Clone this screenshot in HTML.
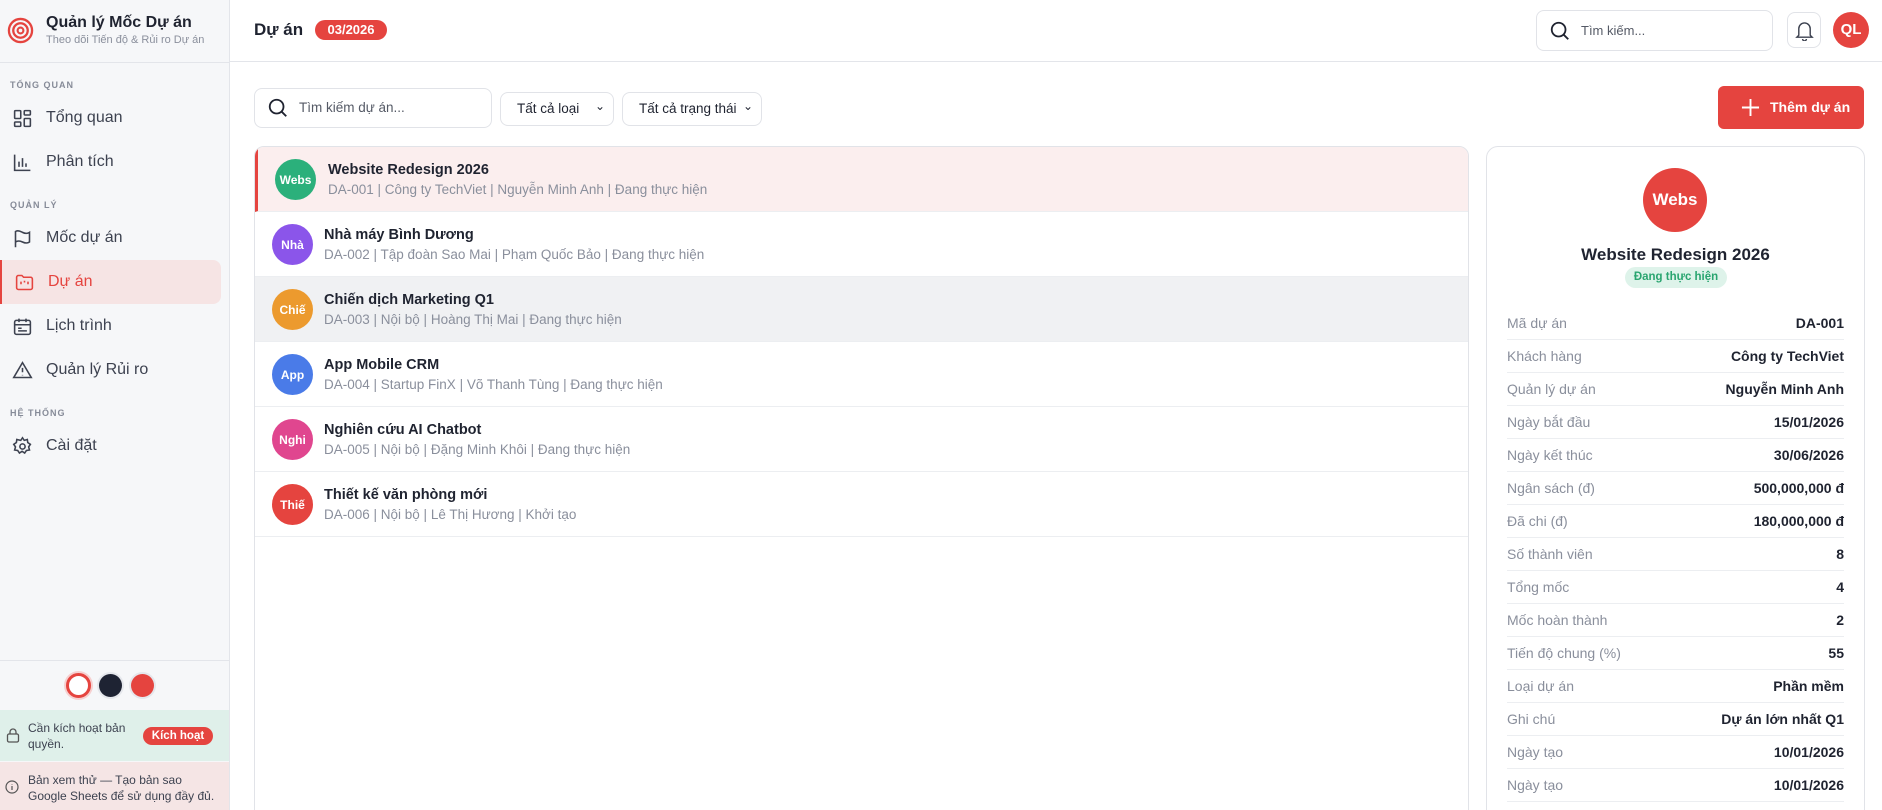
<!DOCTYPE html>
<html><head><meta charset="utf-8"><style>
*{box-sizing:border-box;margin:0;padding:0}
html,body{width:1882px;height:810px;overflow:hidden}
body{font-family:"Liberation Sans","Noto Sans CJK SC",sans-serif;background:#fff;color:#1f2330;position:relative}
.sb{position:absolute;left:0;top:0;width:230px;height:810px;background:#f6f7f9;border-right:1px solid #e3e5ea}
.abs{position:absolute}
.sec{position:absolute;left:10px;font-size:9px;letter-spacing:1px;color:#868b98;font-weight:bold}
.nav{position:absolute;left:12px;width:208px;height:40px;display:flex;align-items:center;font-size:16px;color:#3d4250}
.nav svg{width:21px;height:21px;margin-right:13px;flex:none}
.nav.act{left:0;width:221px;padding-left:12px;background:#f6e4e4;border-left:2px solid #e5443f;border-radius:0 8px 8px 0;color:#e5443f}
.hdr{position:absolute;left:230px;top:0;right:0;height:62px;border-bottom:1px solid #e3e5ea}
.box{position:absolute;border:1px solid #e1e3e8;border-radius:8px;background:#fff}
.row{position:absolute;left:0;right:0;height:65px;border-bottom:1px solid #eceef1}
.av{position:absolute;width:41px;height:41px;border-radius:50%;color:#fff;font-weight:bold;font-size:12px;display:flex;align-items:center;justify-content:center}
.rt{position:absolute;font-size:14.5px;font-weight:bold;color:#1f2330}
.rs{position:absolute;font-size:13.5px;color:#8a8f9c}
.dr{position:absolute;left:20px;right:20px;height:33px;border-bottom:1px solid #eceef1;font-size:14px}
.dr span{position:absolute;left:0;top:8px;color:#8a8f9c;font-size:14px}
.dr b{position:absolute;right:0;top:8px;font-size:14px;color:#1f2330}
</style></head><body>
<div class="sb">
 <svg class="abs" style="left:7px;top:17px" width="27" height="27" viewBox="0 0 28 28"><circle cx="14" cy="14" r="12" fill="none" stroke="#e5443f" stroke-width="2.4"/><circle cx="14" cy="14" r="7.5" fill="none" stroke="#e5443f" stroke-width="2.4"/><circle cx="14" cy="14" r="3" fill="none" stroke="#e5443f" stroke-width="2.2"/></svg>
 <div class="abs" style="left:46px;top:14px;font-size:16px;font-weight:bold">Quản lý Mốc Dự án</div>
 <div class="abs" style="left:46px;top:34px;font-size:11px;color:#8a8f9c">Theo dõi Tiến độ &amp; Rủi ro Dự án</div>
 <div class="abs" style="left:0;top:62px;width:229px;border-top:1px solid #e3e5ea"></div>
 <div class="sec" style="top:80px">TỔNG QUAN</div>
 <div class="nav" style="top:98px"><svg viewBox="0 0 24 24" fill="none" stroke="#3d4250" stroke-width="1.8"><rect x="3" y="3" width="7" height="9" rx="1"/><rect x="14" y="3" width="7" height="5" rx="1"/><rect x="14" y="12" width="7" height="9" rx="1"/><rect x="3" y="16" width="7" height="5" rx="1"/></svg>Tổng quan</div>
 <div class="nav" style="top:142px"><svg viewBox="0 0 24 24" fill="none" stroke="#3d4250" stroke-width="1.8"><path d="M3 3v18h18M8 17v-6M12 17V7M16 17v-4"/></svg>Phân tích</div>
 <div class="sec" style="top:200px">QUẢN LÝ</div>
 <div class="nav" style="top:218px"><svg viewBox="0 0 24 24" fill="none" stroke="#3d4250" stroke-width="1.8"><path d="M4 22V4c3-2 6 0 8 1s5 2 8 0v11c-3 2-6 1-8 0s-5-2-8 0"/></svg>Mốc dự án</div>
 <div class="nav act" style="top:260px;height:44px"><svg viewBox="0 0 24 24" fill="none" stroke="#e5443f" stroke-width="1.8"><path d="M3 6a2 2 0 0 1 2-2h4l2 2h8a2 2 0 0 1 2 2v10a2 2 0 0 1-2 2H5a2 2 0 0 1-2-2z"/><path d="M8 11v3M12 10v2M16 11v3"/></svg>Dự án</div>
 <div class="nav" style="top:306px"><svg viewBox="0 0 24 24" fill="none" stroke="#3d4250" stroke-width="1.8"><rect x="3" y="5" width="18" height="16" rx="2"/><path d="M3 10h18M8 3v4M16 3v4M7 14h4M7 17h10"/></svg>Lịch trình</div>
 <div class="nav" style="top:350px"><svg viewBox="0 0 24 24" fill="none" stroke="#3d4250" stroke-width="1.8"><path d="M12 3L2 20h20z M12 9v5M12 17v.5"/></svg>Quản lý Rủi ro</div>
 <div class="sec" style="top:408px">HỆ THỐNG</div>
 <div class="nav" style="top:426px"><svg viewBox="0 0 24 24" fill="none" stroke="#3d4250" stroke-width="1.8"><circle cx="12" cy="12" r="3"/><path d="M12 2l2 3 3.5-1 .5 3.5 3 2-2 3 1 3.5-3.5.5-2 3-3-2-3 2-2-3-3.5-.5 1-3.5-2-3 3-2 .5-3.5L10 5z"/></svg>Cài đặt</div>
 <div class="abs" style="left:0;top:660px;width:229px;border-top:1px solid #e3e5ea"></div>
 <div class="abs" style="left:66px;top:673px;width:25px;height:25px;border-radius:50%;background:#fff;border:3px solid #e5443f;box-shadow:0 0 0 2px #f6d0d0"></div>
 <div class="abs" style="left:99px;top:674px;width:23px;height:23px;border-radius:50%;background:#1e2333;box-shadow:0 0 0 2px #e5e7ec"></div>
 <div class="abs" style="left:131px;top:674px;width:23px;height:23px;border-radius:50%;background:#e5443f;box-shadow:0 0 0 2px #e5e7ec"></div>
 <div class="abs" style="left:0;top:710px;width:229px;height:51px;background:#dff0ea"></div>
 <svg class="abs" style="left:6px;top:727px" width="14" height="16" viewBox="0 0 14 16" fill="none" stroke="#555" stroke-width="1.3"><rect x="1.5" y="7" width="11" height="8" rx="1.5"/><path d="M4 7V5a3 3 0 0 1 6 0v2"/></svg>
 <div class="abs" style="left:28px;top:720px;font-size:12px;line-height:16px;color:#3d4250">Cần kích hoạt bản<br>quyền.</div>
 <div class="abs" style="left:143px;top:727px;width:70px;height:18px;border-radius:9px;background:#e5443f;color:#fff;font-size:11.5px;font-weight:bold;text-align:center;line-height:18px">Kích hoạt</div>
 <div class="abs" style="left:0;top:762px;width:229px;height:48px;background:#f5e5e5"></div>
 <svg class="abs" style="left:5px;top:780px" width="14" height="14" viewBox="0 0 14 14" fill="none" stroke="#555" stroke-width="1.2"><circle cx="7" cy="7" r="6"/><path d="M7 6v4M7 4v.5"/></svg>
 <div class="abs" style="left:28px;top:772px;font-size:12px;line-height:16px;color:#3d4250">Bản xem thử — Tạo bản sao<br>Google Sheets để sử dụng đầy đủ.</div>
</div>
<div class="hdr">
 <div class="abs" style="left:24px;top:20px;font-size:17px;font-weight:bold">Dự án</div>
 <div class="abs" style="left:85px;top:20px;width:72px;height:20px;border-radius:10px;background:#e5443f;color:#fff;font-size:13px;font-weight:bold;text-align:center;line-height:20px">03/2026</div>
</div>
<div class="box" style="left:1536px;top:10px;width:237px;height:41px"><svg class="abs" style="left:12px;top:9px" width="22" height="22" viewBox="0 0 24 24" fill="none" stroke="#1f2330" stroke-width="2"><circle cx="10.5" cy="10.5" r="7.5"/><path d="M16 16l5 5"/></svg><div class="abs" style="left:44px;top:12px;font-size:13px;color:#555a66">Tìm kiếm...</div></div>
<div class="box" style="left:1787px;top:12px;width:34px;height:36px"><svg class="abs" style="left:7px;top:7px" width="19" height="21" viewBox="0 0 20 22" fill="none" stroke="#3d4250" stroke-width="1.5"><path d="M4 16V9a6 6 0 0 1 12 0v7l2 2H2z M8 20a2 2 0 0 0 4 0"/></svg></div>
<div class="abs" style="left:1833px;top:12px;width:36px;height:36px;border-radius:50%;background:#e5443f;color:#fff;font-weight:bold;font-size:15px;text-align:center;line-height:36px">QL</div>
<div class="box" style="left:254px;top:88px;width:238px;height:40px"><svg class="abs" style="left:12px;top:8px" width="22" height="22" viewBox="0 0 24 24" fill="none" stroke="#1f2330" stroke-width="2"><circle cx="10.5" cy="10.5" r="7.5"/><path d="M16 16l5 5"/></svg><div class="abs" style="left:44px;top:11px;font-size:13.5px;color:#555a66">Tìm kiếm dự án...</div></div>
<div class="box" style="left:500px;top:92px;width:114px;height:34px;font-size:13.5px"><span class="abs" style="left:16px;top:8px">Tất cả loại</span><span class="abs" style="right:8px;top:6px;font-size:12px">&#8964;</span></div>
<div class="box" style="left:622px;top:92px;width:140px;height:34px;font-size:13.5px"><span class="abs" style="left:16px;top:8px">Tất cả trạng thái</span><span class="abs" style="right:8px;top:6px;font-size:12px">&#8964;</span></div>
<div class="abs" style="left:1718px;top:86px;width:146px;height:43px;border-radius:6px;background:#e5443f;color:#fff;font-weight:bold;font-size:14px"><svg class="abs" style="left:23px;top:12px" width="19" height="19" viewBox="0 0 20 20" stroke="#fff" stroke-width="2"><path d="M10 1v18M1 10h18"/></svg><span class="abs" style="left:52px;top:13px">Thêm dự án</span></div>
<div class="box" style="left:254px;top:146px;width:1215px;height:680px;overflow:hidden;border-radius:10px">
 <div class="row" style="top:0;background:#fbeeee;border-left:3px solid #e5443f"><div class="av" style="left:17px;top:12px;background:#2bb07b">Webs</div><div class="rt" style="left:70px;top:15px">Website Redesign 2026</div><div class="rs" style="left:70px;top:35px">DA-001 | Công ty TechViet | Nguyễn Minh Anh | Đang thực hiện</div></div>
 <div class="row" style="top:65px"><div class="av" style="left:17px;top:12px;background:#8b55ea">Nhà</div><div class="rt" style="left:69px;top:15px">Nhà máy Bình Dương</div><div class="rs" style="left:69px;top:35px">DA-002 | Tập đoàn Sao Mai | Phạm Quốc Bảo | Đang thực hiện</div></div>
 <div class="row" style="top:130px;background:#f0f1f3"><div class="av" style="left:17px;top:12px;background:#ec9a2e">Chiế</div><div class="rt" style="left:69px;top:15px">Chiến dịch Marketing Q1</div><div class="rs" style="left:69px;top:35px">DA-003 | Nội bộ | Hoàng Thị Mai | Đang thực hiện</div></div>
 <div class="row" style="top:195px"><div class="av" style="left:17px;top:12px;background:#4a7be8">App</div><div class="rt" style="left:69px;top:15px">App Mobile CRM</div><div class="rs" style="left:69px;top:35px">DA-004 | Startup FinX | Võ Thanh Tùng | Đang thực hiện</div></div>
 <div class="row" style="top:260px"><div class="av" style="left:17px;top:12px;background:#e0468f">Nghi</div><div class="rt" style="left:69px;top:15px">Nghiên cứu AI Chatbot</div><div class="rs" style="left:69px;top:35px">DA-005 | Nội bộ | Đặng Minh Khôi | Đang thực hiện</div></div>
 <div class="row" style="top:325px"><div class="av" style="left:17px;top:12px;background:#e5443f">Thiế</div><div class="rt" style="left:69px;top:15px">Thiết kế văn phòng mới</div><div class="rs" style="left:69px;top:35px">DA-006 | Nội bộ | Lê Thị Hương | Khởi tạo</div></div>
</div>
<div class="box" style="left:1486px;top:146px;width:379px;height:680px;overflow:hidden;border-radius:12px">
 <div class="av" style="left:156px;top:21px;width:64px;height:64px;background:#e5443f;font-size:17px">Webs</div>
 <div class="abs" style="left:0;right:0;top:98px;text-align:center;font-size:17px;font-weight:bold">Website Redesign 2026</div>
 <div class="abs" style="left:138px;top:120px;width:102px;height:21px;border-radius:11px;background:#def3ea;color:#2aa570;font-size:11.5px;font-weight:bold;text-align:center;line-height:21px">Đang thực hiện</div>
 <div class="dr" style="top:160px"><span>Mã dự án</span><b>DA-001</b></div>
 <div class="dr" style="top:193px"><span>Khách hàng</span><b>Công ty TechViet</b></div>
 <div class="dr" style="top:226px"><span>Quản lý dự án</span><b>Nguyễn Minh Anh</b></div>
 <div class="dr" style="top:259px"><span>Ngày bắt đầu</span><b>15/01/2026</b></div>
 <div class="dr" style="top:292px"><span>Ngày kết thúc</span><b>30/06/2026</b></div>
 <div class="dr" style="top:325px"><span>Ngân sách (đ)</span><b>500,000,000 đ</b></div>
 <div class="dr" style="top:358px"><span>Đã chi (đ)</span><b>180,000,000 đ</b></div>
 <div class="dr" style="top:391px"><span>Số thành viên</span><b>8</b></div>
 <div class="dr" style="top:424px"><span>Tổng mốc</span><b>4</b></div>
 <div class="dr" style="top:457px"><span>Mốc hoàn thành</span><b>2</b></div>
 <div class="dr" style="top:490px"><span>Tiến độ chung (%)</span><b>55</b></div>
 <div class="dr" style="top:523px"><span>Loại dự án</span><b>Phần mềm</b></div>
 <div class="dr" style="top:556px"><span>Ghi chú</span><b>Dự án lớn nhất Q1</b></div>
 <div class="dr" style="top:589px"><span>Ngày tạo</span><b>10/01/2026</b></div>
 <div class="dr" style="top:622px"><span>Ngày tạo</span><b>10/01/2026</b></div>
</div>
</body></html>
